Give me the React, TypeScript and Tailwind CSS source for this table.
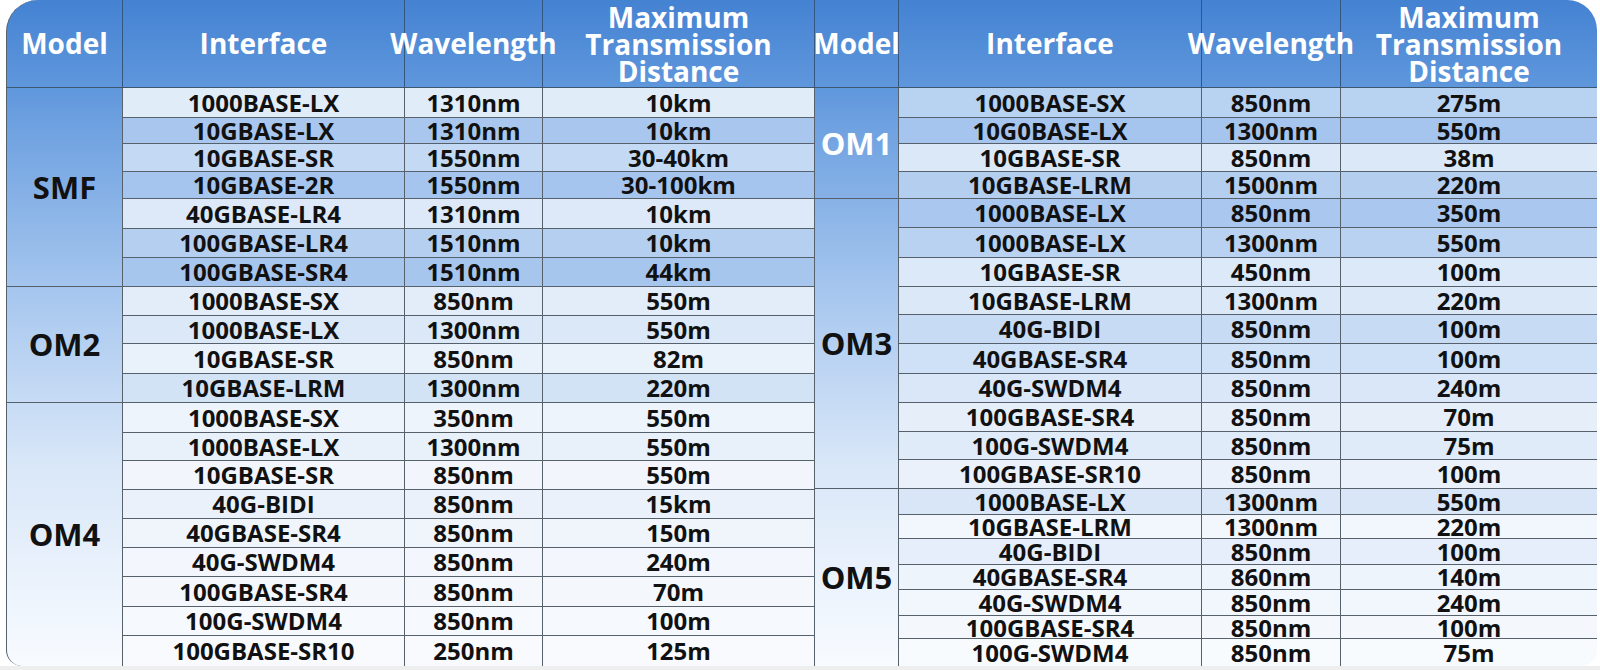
type Row = { h: string; bg: string; cells: [string, string, string] };
type Group = { model: string; white?: boolean; rows: Row[] };

const leftGroups: Group[] = [
  {
    model: "SMF",
    rows: [
      { h: "h-[29px]", bg: "bg-[#e1ecf9]", cells: ["1000BASE-LX", "1310nm", "10km"] },
      { h: "h-[26px]", bg: "bg-[#a9c7ee]", cells: ["10GBASE-LX", "1310nm", "10km"] },
      { h: "h-[28px]", bg: "bg-[#c3d9f4]", cells: ["10GBASE-SR", "1550nm", "30-40km"] },
      { h: "h-[27px]", bg: "bg-[#a6c5ee]", cells: ["10GBASE-2R", "1550nm", "30-100km"] },
      { h: "h-[30px]", bg: "bg-[#dde9f8]", cells: ["40GBASE-LR4", "1310nm", "10km"] },
      { h: "h-[29px]", bg: "bg-[#b5cff1]", cells: ["100GBASE-LR4", "1510nm", "10km"] },
      { h: "h-[29px]", bg: "bg-[#a7c6ee]", cells: ["100GBASE-SR4", "1510nm", "44km"] },
    ],
  },
  {
    model: "OM2",
    rows: [
      { h: "h-[28px]", bg: "bg-[#e3edf9]", cells: ["1000BASE-SX", "850nm", "550m"] },
      { h: "h-[28px]", bg: "bg-[#dbe8f8]", cells: ["1000BASE-LX", "1300nm", "550m"] },
      { h: "h-[30px]", bg: "bg-[#e9f1fb]", cells: ["10GBASE-SR", "850nm", "82m"] },
      { h: "h-[29px]", bg: "bg-[#d2e3f6]", cells: ["10GBASE-LRM", "1300nm", "220m"] },
    ],
  },
  {
    model: "OM4",
    rows: [
      { h: "h-[29px]", bg: "bg-[#eef4fc]", cells: ["1000BASE-SX", "350nm", "550m"] },
      { h: "h-[28px]", bg: "bg-[#e8f0fa]", cells: ["1000BASE-LX", "1300nm", "550m"] },
      { h: "h-[29px]", bg: "bg-[#f2f6fc]", cells: ["10GBASE-SR", "850nm", "550m"] },
      { h: "h-[29px]", bg: "bg-[#eaf1fa]", cells: ["40G-BIDI", "850nm", "15km"] },
      { h: "h-[29px]", bg: "bg-[#f0f5fc]", cells: ["40GBASE-SR4", "850nm", "150m"] },
      { h: "h-[29px]", bg: "bg-[#f3f7fd]", cells: ["40G-SWDM4", "850nm", "240m"] },
      { h: "h-[30px]", bg: "bg-[#f4f8fd]", cells: ["100GBASE-SR4", "850nm", "70m"] },
      { h: "h-[29px]", bg: "bg-[#f6f9fe]", cells: ["100G-SWDM4", "850nm", "100m"] },
      { h: "h-[31px]", bg: "bg-[#f8fafe]", cells: ["100GBASE-SR10", "250nm", "125m"] },
    ],
  },
];

const rightGroups: Group[] = [
  {
    model: "OM1",
    white: true,
    rows: [
      { h: "h-[29px]", bg: "bg-[#b8d2f2]", cells: ["1000BASE-SX", "850nm", "275m"] },
      { h: "h-[26px]", bg: "bg-[#a5c4ee]", cells: ["10G0BASE-LX", "1300nm", "550m"] },
      { h: "h-[28px]", bg: "bg-[#dbe8f8]", cells: ["10GBASE-SR", "850nm", "38m"] },
      { h: "h-[27px]", bg: "bg-[#b4cef0]", cells: ["10GBASE-LRM", "1500nm", "220m"] },
    ],
  },
  {
    model: "OM3",
    rows: [
      { h: "h-[28px]", bg: "bg-[#a9c7ef]", cells: ["1000BASE-LX", "850nm", "350m"] },
      { h: "h-[30px]", bg: "bg-[#b9d2f2]", cells: ["1000BASE-LX", "1300nm", "550m"] },
      { h: "h-[29px]", bg: "bg-[#dce9f8]", cells: ["10GBASE-SR", "450nm", "100m"] },
      { h: "h-[28px]", bg: "bg-[#dbe8f8]", cells: ["10GBASE-LRM", "1300nm", "220m"] },
      { h: "h-[29px]", bg: "bg-[#c7dbf4]", cells: ["40G-BIDI", "850nm", "100m"] },
      { h: "h-[30px]", bg: "bg-[#cfe1f6]", cells: ["40GBASE-SR4", "850nm", "100m"] },
      { h: "h-[29px]", bg: "bg-[#d9e7f8]", cells: ["40G-SWDM4", "850nm", "240m"] },
      { h: "h-[29px]", bg: "bg-[#e6eefa]", cells: ["100GBASE-SR4", "850nm", "70m"] },
      { h: "h-[28px]", bg: "bg-[#e0ebf9]", cells: ["100G-SWDM4", "850nm", "75m"] },
      { h: "h-[29px]", bg: "bg-[#eaf1fb]", cells: ["100GBASE-SR10", "850nm", "100m"] },
    ],
  },
  {
    model: "OM5",
    rows: [
      { h: "h-[25px]", bg: "bg-[#d8e6f7]", cells: ["1000BASE-LX", "1300nm", "550m"] },
      { h: "h-[24px]", bg: "bg-[#f2f6fd]", cells: ["10GBASE-LRM", "1300nm", "220m"] },
      { h: "h-[26px]", bg: "bg-[#e5eefa]", cells: ["40G-BIDI", "850nm", "100m"] },
      { h: "h-[25px]", bg: "bg-[#eef4fc]", cells: ["40GBASE-SR4", "860nm", "140m"] },
      { h: "h-[26px]", bg: "bg-[#f2f7fd]", cells: ["40G-SWDM4", "850nm", "240m"] },
      { h: "h-[23px]", bg: "bg-[#f4f8fd]", cells: ["100GBASE-SR4", "850nm", "100m"] },
      { h: "h-[28px]", bg: "bg-[#f8fbfe]", cells: ["100G-SWDM4", "850nm", "75m"] },
    ],
  },
];

function Half({
  groups,
  modelW,
  cols,
  last,
}: {
  groups: Group[];
  modelW: string;
  cols: string;
  last?: boolean;
}) {
  const line = last ? "" : "border-r";
  return (
    <div className="flex flex-col">
      {/* header */}
      <div className="flex h-[89px] border-b border-[#3d5670] text-white text-[28px] font-bold leading-[27px]">
        <div className={`${modelW} shrink-0 flex items-center justify-center border-r border-[#35577f] whitespace-nowrap`}>
          Model
        </div>
        <div className={`grid ${cols}`}>
          <div className="flex items-center justify-center border-r border-[#35577f]">Interface</div>
          <div className="flex items-center justify-center border-r border-[#35577f] whitespace-nowrap">
            Wavelength
          </div>
          <div className={`flex items-center justify-center text-center pt-[2px] ${line} border-[#35577f]`}>
            Maximum
            <br />
            Transmission
            <br />
            Distance
          </div>
        </div>
      </div>

      {groups.map((g, gi) => (
        <div key={g.model} className={`flex ${gi > 0 ? "border-t border-[#56616c]" : ""}`}>
          <div
            className={`${modelW} shrink-0 flex items-center justify-center border-r border-[#56616c] text-[31px] font-bold ${
              g.white ? "text-white" : "text-[#111]"
            }`}
          >
            {g.model}
          </div>
          <div className="flex flex-col">
            {g.rows.map((r, ri) => (
              <div
                key={ri}
                className={`grid ${cols} ${r.h} ${r.bg} ${ri > 0 ? "border-t border-[#56616c]" : ""}`}
              >
                {r.cells.map((c, ci) => (
                  <div
                    key={ci}
                    className={`flex items-center justify-center text-[24px] font-bold leading-none text-[#111] whitespace-nowrap border-[#56616c] ${
                      ci < 2 ? "border-r" : line
                    }`}
                  >
                    {c}
                  </div>
                ))}
              </div>
            ))}
          </div>
        </div>
      ))}
    </div>
  );
}

export default function App() {
  return (
    <div
      className="w-[1600px] h-[670px] bg-white pl-[6px] pr-[3px]"
      style={{ fontFamily: '"Open Sans", "DejaVu Sans", sans-serif' }}
    >
      <div className="flex w-[1591px] h-[666px] overflow-hidden rounded-tl-[32px] rounded-tr-[30px] rounded-b-[16px] border-l border-[#56616c] bg-[linear-gradient(180deg,#4482d2_0%,#5f97dc_13%,#71a3e1_20%,#a9c8ef_45%,#d9e7f8_70%,#f8fbff_100%)]">
        <Half groups={leftGroups} modelW="w-[116px]" cols="grid-cols-[282px_138px_272px]" />
        <Half groups={rightGroups} modelW="w-[84px]" cols="grid-cols-[303px_139px_256px]" last />
      </div>
      <div className="h-[4px] bg-[#eeeeee] -mx-[6px]" />
    </div>
  );
}
